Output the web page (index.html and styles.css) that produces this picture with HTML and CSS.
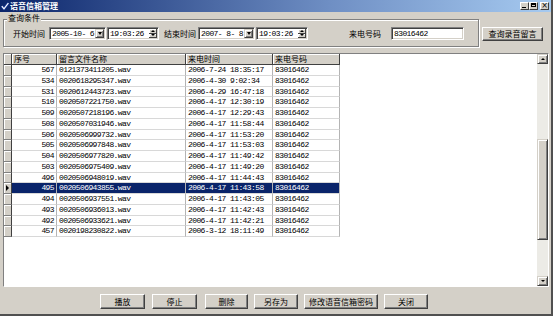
FILE: index.html
```html
<!DOCTYPE html>
<html lang="zh-CN">
<head>
<meta charset="UTF-8" />
<title>语音信箱管理</title>
<link rel="stylesheet" href="styles.css">
</head>
<body>

<div class="window">

<div class="titlebar">
    <svg class="app-icon" width="8" height="8" viewBox="0 0 8 8">
        <path d="M0.8 4.2 L3 6.8 L7.4 1" fill="none" stroke="#1c3c9c" stroke-width="2.4"/>
        <path d="M0.8 4.2 L3 6.8 L7.4 1" fill="none" stroke="#ffffff" stroke-width="1.2"/>
    </svg>
    <span class="title">语音信箱管理</span>
    <div class="caption">
        <span class="cap cap-min"></span>
        <span class="cap cap-max"></span>
        <span class="cap cap-close">×</span>
    </div>
</div>

<div class="client">

    <div class="top">
        <div class="group">
            <div class="legend">查询条件</div>
            <div class="query-row">
                <span class="label">开始时间</span>
                <div class="field date"><span class="val mono">2005-10- 6</span><span class="drop"></span></div>
                <div class="field time"><span class="val mono">19:03:26</span><span class="spin"><i class="up"></i><i class="down"></i></span></div>
                <span class="label end-label">结束时间</span>
                <div class="field date"><span class="val mono">2007- 8- 8</span><span class="drop"></span></div>
                <div class="field time"><span class="val mono">19:03:26</span><span class="spin"><i class="up"></i><i class="down"></i></span></div>
                <span class="label phone-label">来电号码</span>
                <div class="field edit"><span class="val mono">83016462</span></div>
            </div>
        </div>
        <button class="btn query-btn">查询录音留言</button>
    </div>

    <div class="grid-box">
        <div class="grid-area">
            <div class="table">
                <div class="hd"></div><div class="hd">序号</div><div class="hd">留言文件名称</div><div class="hd">来电时间</div><div class="hd">来电号码</div>

                <div class="ind"></div><div class="cell num mono">567</div><div class="cell mono">0121373411205.wav</div><div class="cell mono">2006-7-24 18:35:17</div><div class="cell mono">83016462</div>
                <div class="ind"></div><div class="cell num mono">534</div><div class="cell mono">0020618295347.wav</div><div class="cell mono">2006-4-30 9:02:34</div><div class="cell mono">83016462</div>
                <div class="ind"></div><div class="cell num mono">531</div><div class="cell mono">0020612443723.wav</div><div class="cell mono">2006-4-29 16:47:18</div><div class="cell mono">83016462</div>
                <div class="ind"></div><div class="cell num mono">510</div><div class="cell mono">0020507221750.wav</div><div class="cell mono">2006-4-17 12:30:19</div><div class="cell mono">83016462</div>
                <div class="ind"></div><div class="cell num mono">509</div><div class="cell mono">0020507218196.wav</div><div class="cell mono">2006-4-17 12:29:43</div><div class="cell mono">83016462</div>
                <div class="ind"></div><div class="cell num mono">508</div><div class="cell mono">0020507031946.wav</div><div class="cell mono">2006-4-17 11:58:44</div><div class="cell mono">83016462</div>
                <div class="ind"></div><div class="cell num mono">506</div><div class="cell mono">0020506999732.wav</div><div class="cell mono">2006-4-17 11:53:20</div><div class="cell mono">83016462</div>
                <div class="ind"></div><div class="cell num mono">505</div><div class="cell mono">0020506997848.wav</div><div class="cell mono">2006-4-17 11:53:03</div><div class="cell mono">83016462</div>
                <div class="ind"></div><div class="cell num mono">504</div><div class="cell mono">0020506977820.wav</div><div class="cell mono">2006-4-17 11:49:42</div><div class="cell mono">83016462</div>
                <div class="ind"></div><div class="cell num mono">503</div><div class="cell mono">0020506975409.wav</div><div class="cell mono">2006-4-17 11:49:20</div><div class="cell mono">83016462</div>
                <div class="ind"></div><div class="cell num mono">496</div><div class="cell mono">0020506948019.wav</div><div class="cell mono">2006-4-17 11:44:43</div><div class="cell mono">83016462</div>
                <div class="ind current"></div><div class="cell num mono sel">495</div><div class="cell mono sel">0020506943855.wav</div><div class="cell mono sel">2006-4-17 11:43:58</div><div class="cell mono sel">83016462</div>
                <div class="ind"></div><div class="cell num mono">494</div><div class="cell mono">0020506937551.wav</div><div class="cell mono">2006-4-17 11:43:05</div><div class="cell mono">83016462</div>
                <div class="ind"></div><div class="cell num mono">493</div><div class="cell mono">0020506936013.wav</div><div class="cell mono">2006-4-17 11:42:43</div><div class="cell mono">83016462</div>
                <div class="ind"></div><div class="cell num mono">492</div><div class="cell mono">0020506933621.wav</div><div class="cell mono">2006-4-17 11:42:21</div><div class="cell mono">83016462</div>
                <div class="ind"></div><div class="cell num mono">457</div><div class="cell mono">0020198230822.wav</div><div class="cell mono">2006-3-12 18:11:49</div><div class="cell mono">83016462</div>
            </div>
        </div>
        <div class="vscroll">
            <span class="sb-btn sb-up"></span>
            <span class="thumb"></span>
            <span class="sb-btn sb-down"></span>
        </div>
    </div>

    <div class="bottom">
        <button class="btn b-play">播放</button>
        <button class="btn b-stop">停止</button>
        <button class="btn b-del">删除</button>
        <button class="btn b-save">另存为</button>
        <button class="btn b-pwd">修改语音信箱密码</button>
        <button class="btn b-close">关闭</button>
    </div>

</div>

</div>

</body>
</html>
```

FILE: styles.css
```css
@charset "utf-8";

html, body {
    margin: 0;
    padding: 0;
}

body {
    width: 553px;
    height: 316px;
    overflow: hidden;
    background: #d4d0c8;
    font-family: "Noto Sans CJK SC", sans-serif;
    font-size: 8px;
    color: #000000;
}

.window {
    width: 553px;
    height: 316px;
    box-sizing: border-box;
    border-right: 2px solid #505050;
    border-bottom: 2px solid #505050;
    background: #d4d0c8;
}

.mono {
    font-family: "Liberation Mono", monospace;
    font-size: 8px;
    letter-spacing: -0.6px;
    white-space: pre;
}

/* title bar */

.titlebar {
    height: 12px;
    display: flex;
    align-items: center;
    background: linear-gradient(to right, #0a246a, #6f8fc4 60%, #a6caf0);
}

.app-icon {
    margin-left: 1px;
    display: block;
}

.title {
    margin-left: 1px;
    color: #ffffff;
    font-weight: bold;
    font-size: 8px;
    line-height: 12px;
}

.caption {
    margin-left: auto;
    margin-right: 2px;
    display: flex;
    align-items: center;
}

.cap {
    width: 9px;
    height: 8px;
    box-sizing: border-box;
    background: #d4d0c8;
    border: 1px solid;
    border-color: #ffffff #404040 #404040 #ffffff;
    position: relative;
    font-family: "DejaVu Sans", sans-serif;
    font-size: 8px;
    line-height: 6px;
    text-align: center;
}

.cap-max {
    margin-right: 2px;
}

.cap-min::after {
    content: "";
    position: absolute;
    left: 1px;
    bottom: 1px;
    width: 4px;
    height: 1px;
    background: #000000;
}

.cap-max::after {
    content: "";
    position: absolute;
    left: 1px;
    top: 0;
    width: 5px;
    height: 4px;
    box-sizing: border-box;
    border: 1px solid #000000;
    border-top-width: 2px;
}

/* query group */

.client {
    padding-left: 3px;
}

.top {
    display: flex;
    align-items: flex-start;
    margin-top: 7px;
}

.group {
    width: 476px;
    box-sizing: border-box;
    border: 1px solid #808080;
    box-shadow: inset 1px 1px 0 #ffffff, 1px 1px 0 #ffffff;
    padding: 0 0 6px 9px;
}

.legend {
    width: max-content;
    height: 9px;
    margin: -7px 0 0 -6px;
    padding: 0 1px;
    line-height: 9px;
    background: #d4d0c8;
}

.query-row {
    margin-top: 5px;
    height: 13px;
    display: flex;
    align-items: center;
}

.label {
    width: 32px;
    line-height: 13px;
    margin-right: 4px;
}

.end-label {
    margin-left: 5px;
    margin-right: 2px;
}

.phone-label {
    margin-left: 41px;
    margin-right: 10px;
}

.field {
    height: 13px;
    box-sizing: border-box;
    display: flex;
    background: #ffffff;
    border: 1px solid;
    border-color: #808080 #ffffff #ffffff #808080;
    box-shadow: inset 1px 1px 0 #404040, inset -1px -1px 0 #d4d0c8;
    padding: 1px;
}

.field .val {
    flex: 1;
    line-height: 9px;
    padding-left: 1px;
}

.date {
    width: 57px;
    margin-right: 1px;
}

.time {
    width: 52px;
}

.edit {
    width: 73px;
}

.drop {
    width: 9px;
    height: 9px;
    box-sizing: border-box;
    background: #d4d0c8;
    border: 1px solid;
    border-color: #d4d0c8 #404040 #404040 #d4d0c8;
    box-shadow: inset 1px 1px 0 #ffffff, inset -1px -1px 0 #808080;
    display: flex;
    align-items: center;
    justify-content: center;
}

.drop::after {
    content: "";
    border-left: 2.5px solid transparent;
    border-right: 2.5px solid transparent;
    border-top: 3px solid #000000;
}

.spin {
    width: 8px;
    display: flex;
    flex-direction: column;
}

.spin i {
    flex: 1;
    background: #d4d0c8;
    border-right: 1px solid #404040;
    border-bottom: 1px solid #404040;
    box-shadow: inset 1px 1px 0 #ffffff;
    display: flex;
    align-items: center;
    justify-content: center;
}

.spin .up::after {
    content: "";
    border-left: 2px solid transparent;
    border-right: 2px solid transparent;
    border-bottom: 2px solid #000000;
}

.spin .down::after {
    content: "";
    border-left: 2px solid transparent;
    border-right: 2px solid transparent;
    border-top: 2px solid #000000;
}

/* buttons */

.btn {
    height: 15px;
    margin: 0;
    padding: 0;
    box-sizing: border-box;
    background: #d4d0c8;
    border: 1px solid;
    border-color: #ffffff #404040 #404040 #ffffff;
    box-shadow: inset -1px -1px 0 #808080;
    font-family: "Noto Sans CJK SC", sans-serif;
    font-size: 8px;
    line-height: 12px;
    color: #000000;
}

.query-btn {
    width: 61px;
    height: 14px;
    margin: 8px 0 0 3px;
}

/* grid */

.grid-box {
    margin-top: 6px;
    width: 546px;
    height: 234px;
    box-sizing: border-box;
    border: 1px solid;
    border-color: #808080 #ffffff #ffffff #808080;
    display: flex;
    background: #ffffff;
}

.grid-area {
    flex: 1;
    overflow: hidden;
}

.table {
    display: grid;
    grid-template-columns: 8px 45px 129px 87px 67px;
    grid-template-rows: 11px;
    grid-auto-rows: 10.75px;
    width: max-content;
}

.hd {
    box-sizing: border-box;
    background: #d4d0c8;
    border-right: 1px solid #404040;
    border-bottom: 1px solid #404040;
    box-shadow: inset 1px 1px 0 #ffffff;
    padding-left: 2px;
    line-height: 10px;
    overflow: hidden;
}

.ind {
    box-sizing: border-box;
    background: #d4d0c8;
    border-right: 1px solid #404040;
    border-bottom: 1px solid #808080;
    box-shadow: inset 1px 1px 0 #ffffff;
    display: flex;
    align-items: center;
    justify-content: center;
}

.ind.current::after {
    content: "";
    border-top: 3px solid transparent;
    border-bottom: 3px solid transparent;
    border-left: 3px solid #000000;
}

.cell {
    box-sizing: border-box;
    border-right: 1px solid #b4b4b4;
    border-bottom: 1px solid #d8d8d8;
    padding: 0 2px;
    line-height: 10px;
    overflow: hidden;
}

.num {
    text-align: right;
}

.sel {
    background: #0a246a;
    color: #ffffff;
}

/* scrollbar */

.vscroll {
    width: 11px;
    display: flex;
    flex-direction: column;
    background: #ecebe6;
}

.sb-btn, .thumb {
    box-sizing: border-box;
    background: #d4d0c8;
    border: 1px solid;
    border-color: #d4d0c8 #404040 #404040 #d4d0c8;
    box-shadow: inset 1px 1px 0 #ffffff, inset -1px -1px 0 #808080;
}

.sb-btn {
    height: 10px;
    display: flex;
    align-items: center;
    justify-content: center;
}

.sb-up::after {
    content: "";
    border-left: 2px solid transparent;
    border-right: 2px solid transparent;
    border-bottom: 2px solid #000000;
}

.sb-down::after {
    content: "";
    border-left: 2px solid transparent;
    border-right: 2px solid transparent;
    border-top: 2px solid #000000;
}

.thumb {
    height: 101px;
    margin-top: 75px;
}

.sb-down {
    margin-top: auto;
}

/* bottom bar */

.bottom {
    height: 26px;
    box-sizing: border-box;
    padding: 7px 0 0 97px;
    display: flex;
    align-items: flex-start;
}

.b-play, .b-stop {
    width: 45px;
    margin-right: 7px;
}

.b-del {
    width: 43px;
    margin: 0 6px 0 1px;
}

.b-save {
    width: 44px;
    margin-right: 6px;
}

.b-pwd {
    width: 74px;
    margin-right: 6px;
}

.b-close {
    width: 44px;
}
```
